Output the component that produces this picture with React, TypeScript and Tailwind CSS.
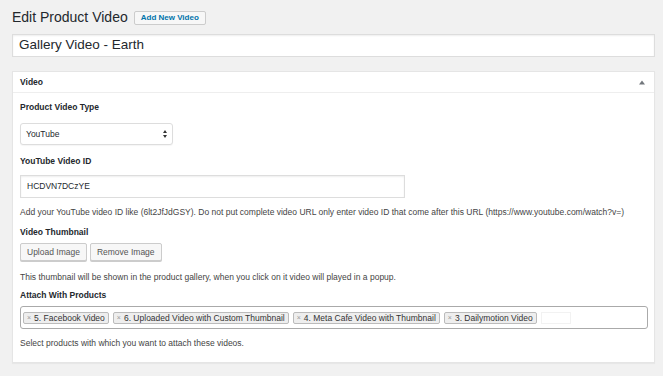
const tags = [
  '5. Facebook Video',
  '6. Uploaded Video with Custom Thumbnail',
  '4. Meta Cafe Video with Thumbnail',
  '3. Dailymotion Video',
];

const Label = ({ children }: { children: string }) => (
  <div className="text-[8.5px] font-bold text-[#23282d] leading-[12px]">{children}</div>
);

const Help = ({ children }: { children: string }) => (
  <p className="text-[8.5px] text-[#444] leading-[12px]">{children}</p>
);

const Button = ({ children }: { children: string }) => (
  <button className="h-[18px] px-[6px] border border-[#ccc] rounded-[2px] bg-[#f7f7f7] text-[8.5px] text-[#555] shadow-[0_1px_0_#ccc]">
    {children}
  </button>
);

export default function App() {
  return (
    <div className="w-[663px] h-[376px] bg-[#f1f1f1] px-[12px] pt-[8px] font-['Liberation_Sans',Arial,sans-serif] text-[#23282d] overflow-hidden">
      <div className="flex items-center gap-[6px] h-[19px]">
        <h1 className="text-[14px] leading-[19px] text-[#23282d]">Edit Product Video</h1>
        <button className="h-[14px] px-[6px] border border-[#ccc] rounded-[2px] bg-[#f7f7f7] text-[8px] font-bold text-[#0073aa] leading-[12px]">
          Add New Video
        </button>
      </div>
      <div className="mt-[7px] w-[643px] h-[23px] border border-[#ddd] bg-white flex items-center px-[6px] text-[13.5px] shadow-[inset_0_1px_2px_rgba(0,0,0,0.07)]">
        Gallery Video - Earth
      </div>
      <div className="mt-[14px] w-[643px] h-[292px] border border-[#e5e5e5] bg-white shadow-[0_1px_1px_rgba(0,0,0,0.04)]">
        <div className="h-[21px] border-b border-[#eee] flex items-center justify-between pl-[7px] pr-[9px]">
          <span className="text-[8.5px] font-bold">Video</span>
          <svg width="6" height="5" viewBox="0 0 6 5" className="fill-[#72777c]">
            <path d="M0 4.5 L3 0.5 L6 4.5 Z" />
          </svg>
        </div>
        <div className="px-[7px] pt-[8px]">
          <Label>Product Video Type</Label>
          <div className="mt-[10px] w-[153px] h-[22px] border border-[#ddd] rounded-[3px] bg-white flex items-center justify-between px-[5px] shadow-[0_1px_1px_rgba(0,0,0,0.04)]">
            <span className="text-[8.5px]">YouTube</span>
            <svg width="4" height="8" viewBox="0 0 4 8" className="fill-[#333]">
              <path d="M0 3 L2 0 L4 3 Z M0 5 L2 8 L4 5 Z" />
            </svg>
          </div>
          <div className="mt-[10px]">
            <Label>YouTube Video ID</Label>
          </div>
          <div className="mt-[8px] w-[385px] h-[23px] border border-[#ddd] bg-white flex items-center px-[6px] text-[8.5px] shadow-[inset_0_1px_2px_rgba(0,0,0,0.07)]">
            HCDVN7DCzYE
          </div>
          <div className="mt-[8px]">
            <Help>
              Add your YouTube video ID like (6lt2JfJdGSY). Do not put complete video URL only enter video ID that come after this URL (https://www.youtube.com/watch?v=)
            </Help>
          </div>
          <div className="mt-[8px]">
            <Label>Video Thumbnail</Label>
          </div>
          <div className="mt-[5px] flex gap-[3px]">
            <Button>Upload Image</Button>
            <Button>Remove Image</Button>
          </div>
          <div className="mt-[10px]">
            <Help>This thumbnail will be shown in the product gallery, when you click on it video will played in a popup.</Help>
          </div>
          <div className="mt-[6px]">
            <Label>Attach With Products</Label>
          </div>
          <div className="mt-[5px] w-[628px] h-[23px] border border-[#aaa] rounded-[3px] bg-white flex items-center gap-[4px] px-[2px]">
            {tags.map((t) => (
              <span
                key={t}
                className="h-[12px] flex items-center gap-[3px] px-[3px] border border-[#bbb] rounded-[2px] bg-[#eee] text-[8.5px] text-[#333] leading-[10px]"
              >
                <span className="text-[#999] text-[7px]">×</span>
                {t}
              </span>
            ))}
            <span className="w-[30px] h-[12px] border border-[#f2f2f2]" />
          </div>
          <div className="mt-[8px]">
            <Help>Select products with which you want to attach these videos.</Help>
          </div>
        </div>
      </div>
    </div>
  );
}
